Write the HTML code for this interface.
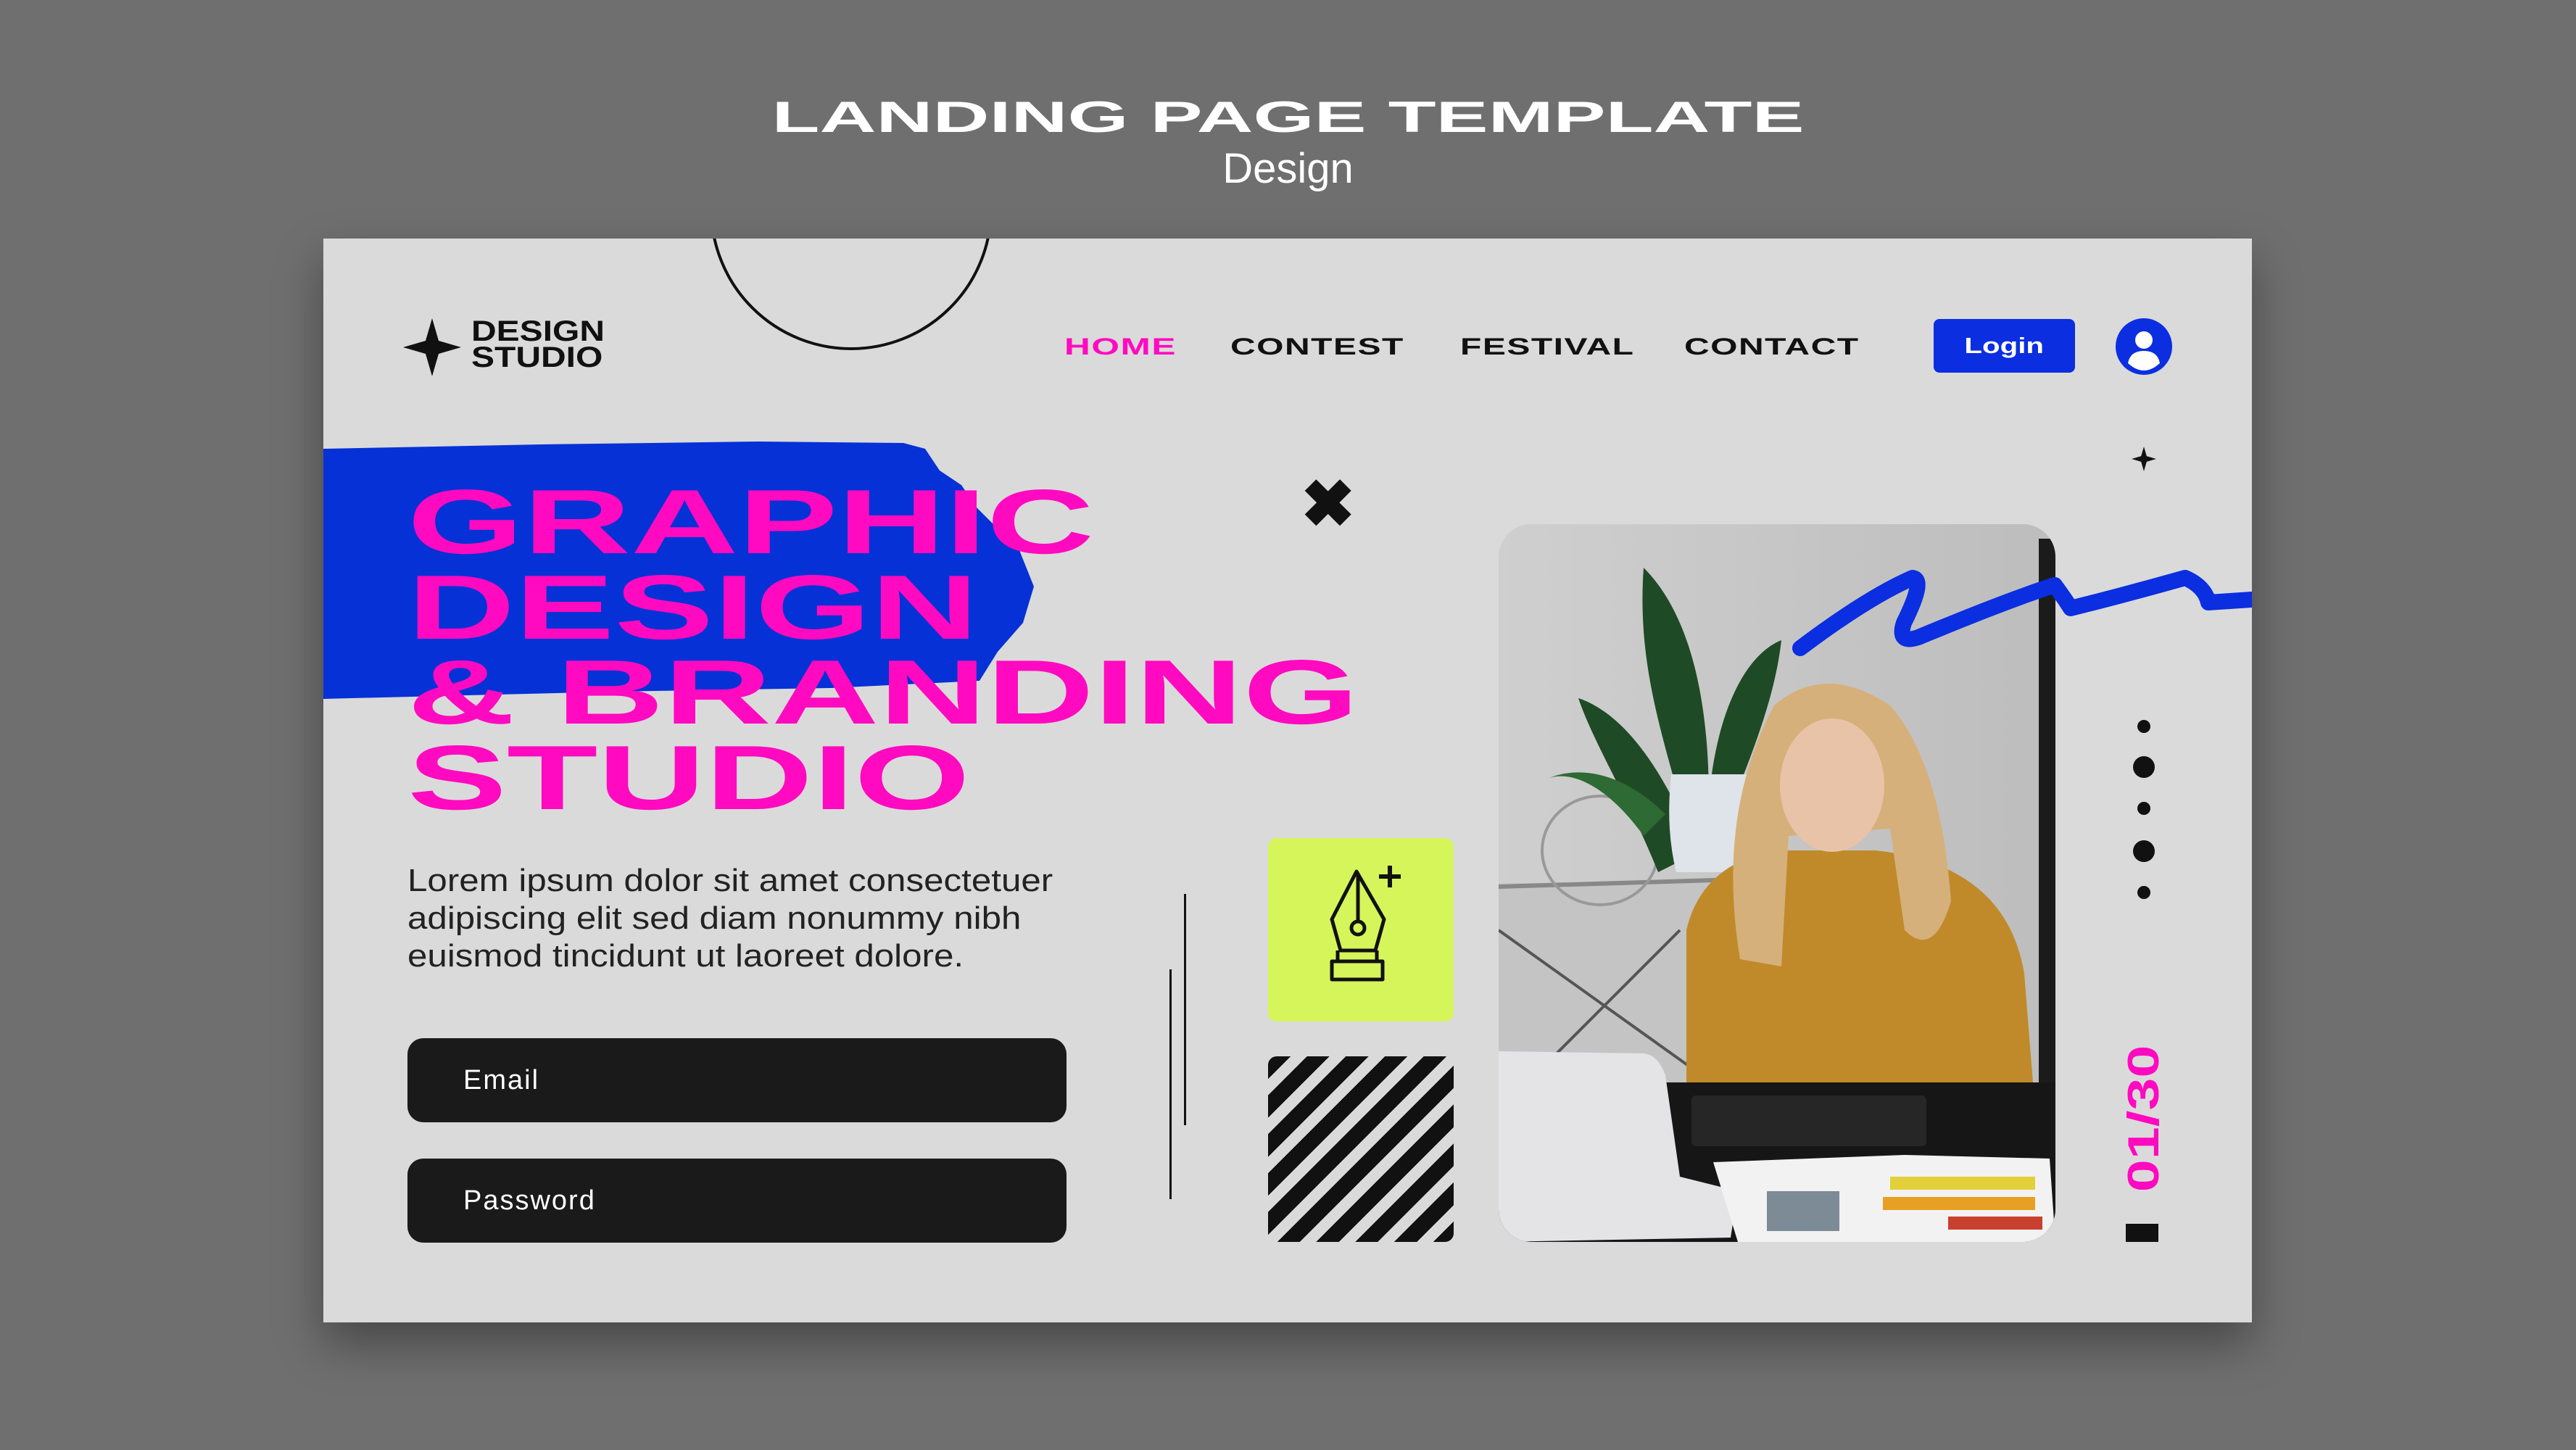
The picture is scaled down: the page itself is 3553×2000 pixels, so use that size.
<!DOCTYPE html>
<html><head><meta charset="utf-8"><style>
*{margin:0;padding:0;box-sizing:border-box}
body{width:3553px;height:2000px;background:#6f6f6f;position:relative;overflow:hidden;font-family:"Liberation Sans",sans-serif}
.a{position:absolute}
.wide{display:inline-block;transform-origin:left center;font-weight:900}
.card{left:446px;top:329px;width:2660px;height:1495px;background:#dadada;box-shadow:0 30px 60px rgba(0,0,0,.35);overflow:hidden}
.nav{top:131px;font-size:32px;font-weight:900;letter-spacing:1px;white-space:nowrap}
.h{left:116px;font-size:126px;line-height:126px;color:#ff0ac0;font-weight:900;white-space:nowrap;transform:scaleX(1.63);transform-origin:left top}
.inp{left:116px;width:909px;height:116px;background:#1a1a1a;border-radius:22px;color:#fff;font-size:38px;letter-spacing:2px;padding-left:77px;line-height:116px}
.dot{background:#111;border-radius:50%}
</style></head><body>
<div class="a" style="left:0;width:3553px;top:132px;text-align:center;color:#fff">
 <span class="wide" style="font-size:60px;line-height:60px;transform:scaleX(1.8);transform-origin:center">LANDING PAGE TEMPLATE</span>
</div>
<div class="a" style="left:0;width:3553px;top:198px;text-align:center;color:#fff;font-size:58px;line-height:70px">Design</div>

<div class="a card">
 <div class="a" style="left:533px;top:-236px;width:390px;height:390px;border:4px solid #111;border-radius:50%"></div>
 <svg class="a" style="left:110px;top:110px" width="80" height="80" viewBox="0 0 80 80"><path d="M40 0 L49 31 L80 40 L49 49 L40 80 L31 49 L0 40 L31 31Z" fill="#111"/></svg>
 <div class="a" style="left:204px;top:110px;font-size:40px;line-height:36px;font-weight:700;color:#111;transform:scaleX(1.2);transform-origin:left">DESIGN<br>STUDIO</div>
 <div class="a nav" style="left:1022px;color:#ff0ac0"><span class="wide" style="transform:scaleX(1.55)">HOME</span></div>
 <div class="a nav" style="left:1251px;color:#111"><span class="wide" style="transform:scaleX(1.5)">CONTEST</span></div>
 <div class="a nav" style="left:1568px;color:#111"><span class="wide" style="transform:scaleX(1.5)">FESTIVAL</span></div>
 <div class="a nav" style="left:1877px;color:#111"><span class="wide" style="transform:scaleX(1.5)">CONTACT</span></div>
 <div class="a" style="left:2221px;top:111px;width:195px;height:74px;background:#0a2ee0;border-radius:8px;color:#fff;text-align:center;line-height:74px;font-size:31px;font-weight:900"><span style="display:inline-block;transform:scaleX(1.3)">Login</span></div>
 <svg class="a" style="left:2472px;top:110px" width="78" height="78" viewBox="0 0 78 78"><circle cx="39" cy="39" r="39" fill="#0a2ee0"/><circle cx="39" cy="30" r="12" fill="#fff"/><path d="M17 62 Q20 45 39 45 Q58 45 61 62 Q50 72 39 72 Q28 72 17 62Z" fill="#fff"/></svg>
 <svg class="a" style="left:0;top:280px" width="1000" height="360" viewBox="0 0 1000 360"><path d="M0 10 L300 4 L600 0 L800 2 L830 10 L850 40 L880 60 L900 90 L930 120 L960 150 L980 200 L965 250 L930 290 L905 330 L700 340 L400 345 L0 355Z" fill="#0631d6"/></svg>
 <div class="a h" style="top:328px">GRAPHIC</div>
 <div class="a h" style="top:446px">DESIGN</div>
 <div class="a h" style="top:563px">&amp; BRANDING</div>
 <div class="a h" style="top:681px">STUDIO</div>
 <div class="a" style="left:116px;top:860px;font-size:44px;line-height:52px;color:#222;transform:scaleX(1.12);transform-origin:left top;white-space:nowrap">Lorem ipsum dolor sit amet consectetuer<br>adipiscing elit sed diam nonummy nibh<br>euismod tincidunt ut laoreet dolore.</div>
 <div class="a inp" style="top:1103px">Email</div>
 <div class="a inp" style="top:1269px">Password</div>
 <div class="a" style="left:1187px;top:904px;width:3px;height:319px;background:#111"></div>
 <div class="a" style="left:1167px;top:1008px;width:3px;height:317px;background:#111"></div>
 <div class="a" style="left:1348px;top:322px;font-size:90px;line-height:90px;font-weight:900;color:#111">✖</div>
 <div class="a" style="left:1303px;top:827px;width:256px;height:253px;background:#d6f55a;border-radius:12px"></div>
 <svg class="a" style="left:1303px;top:827px" width="256" height="253" viewBox="0 0 256 253" fill="none" stroke="#111" stroke-width="5" stroke-linejoin="round"><path d="M122 46 L88 112 L100 155 L148 155 L160 112 Z"/><path d="M124 50 L124 116"/><circle cx="124" cy="124" r="9"/><rect x="88" y="170" width="70" height="25"/><path d="M96 155 L96 170 M150 155 L150 170"/><path d="M168 38 L168 68 M153 53 L183 53" stroke-width="6"/></svg>
 <div class="a" style="left:1303px;top:1128px;width:256px;height:256px;border-radius:12px;background:repeating-linear-gradient(135deg,#111 0 22px,#dadada 22px 38px)"></div>
 <svg class="a" style="left:1621px;top:394px" width="768" height="990" viewBox="0 0 768 990">
  <defs><clipPath id="c"><rect width="768" height="990" rx="45"/></clipPath>
  <linearGradient id="w" x1="0" y1="0" x2="1" y2="0"><stop offset="0" stop-color="#cfcfcf"/><stop offset="1" stop-color="#bdbdbd"/></linearGradient></defs>
  <g clip-path="url(#c)">
   <rect width="768" height="990" fill="url(#w)"/>
   <rect x="0" y="495" width="330" height="300" fill="#c4c4c4"/>
   <path d="M0 500 L330 490" stroke="#888" stroke-width="6"/>
   <path d="M0 560 L280 760 M40 770 L250 560" stroke="#555" stroke-width="4"/>
   <ellipse cx="140" cy="450" rx="80" ry="75" fill="none" stroke="#999" stroke-width="4"/>
   <path d="M220 480 C180 380 130 300 110 240 C170 260 220 330 260 420 C230 300 190 200 200 60 C260 120 290 230 290 380 C300 260 340 180 390 160 C380 250 340 340 300 440Z" fill="#1f4a26"/>
   <path d="M200 430 C150 360 100 340 70 350 C120 330 180 350 230 400Z" fill="#2e6a34"/>
   <path d="M238 345 Q230 420 245 480 L345 480 Q360 420 350 345Z" fill="#dfe3ea"/>
   <rect x="745" y="20" width="23" height="760" fill="#1b1b1b"/>
   <path d="M259 560 Q280 470 380 450 L520 450 Q700 470 725 620 L740 808 L259 808Z" fill="#c08a2a"/>
   <path d="M333 600 Q300 400 380 250 Q450 190 540 250 Q610 330 624 520 Q600 600 560 560 L540 420 L400 430 L390 610Z" fill="#d6b07a"/>
   <ellipse cx="460" cy="360" rx="72" ry="92" fill="#e9c3a8"/>
   <rect x="0" y="770" width="768" height="220" fill="#161616"/>
   <rect x="266" y="788" width="324" height="70" rx="6" fill="#262626"/>
   <path d="M0 727 L200 730 Q220 732 230 760 L250 900 L330 920 L320 984 L0 990Z" fill="#e4e4e6"/>
   <path d="M296 880 L560 870 L760 875 L768 990 L330 990Z" fill="#f2f2f2"/>
   <rect x="370" y="920" width="100" height="55" fill="#7d8b96"/>
   <rect x="540" y="900" width="200" height="18" fill="#e2cf3a"/>
   <rect x="530" y="928" width="210" height="18" fill="#e7a023"/>
   <rect x="620" y="955" width="130" height="18" fill="#c8402e"/>
  </g>
 </svg>
 <svg class="a" style="left:2020px;top:440px" width="640" height="140" viewBox="0 0 640 140" fill="none" stroke="#0a2ee0" stroke-width="22" stroke-linecap="round" stroke-linejoin="round"><path d="M17 125 Q110 55 172 28 Q190 30 160 90 Q150 120 180 110 Q300 60 368 38 Q384 60 390 70 Q470 50 548 28 Q575 40 580 62 L640 58"/></svg>
 <svg class="a" style="left:2494px;top:287px" width="34" height="34" viewBox="0 0 80 80"><path d="M40 0 L49 31 L80 40 L49 49 L40 80 L31 49 L0 40 L31 31Z" fill="#111"/></svg>
 <div class="a dot" style="left:2502px;top:664px;width:18px;height:18px"></div>
 <div class="a dot" style="left:2496px;top:714px;width:30px;height:30px"></div>
 <div class="a dot" style="left:2502px;top:777px;width:18px;height:18px"></div>
 <div class="a dot" style="left:2496px;top:830px;width:30px;height:30px"></div>
 <div class="a dot" style="left:2502px;top:893px;width:18px;height:18px"></div>
 <div class="a" style="left:2511px;top:1214px;width:0;height:0">
  <div style="position:absolute;left:-150px;top:-35px;width:300px;height:70px;text-align:center;transform:rotate(-90deg);color:#ff0ac0;font-size:60px;line-height:70px;font-weight:900"><span style="display:inline-block;transform:scaleX(1.35)">01/30</span></div>
 </div>
 <div class="a" style="left:2486px;top:1359px;width:45px;height:25px;background:#111"></div>
</div>
</body></html>
